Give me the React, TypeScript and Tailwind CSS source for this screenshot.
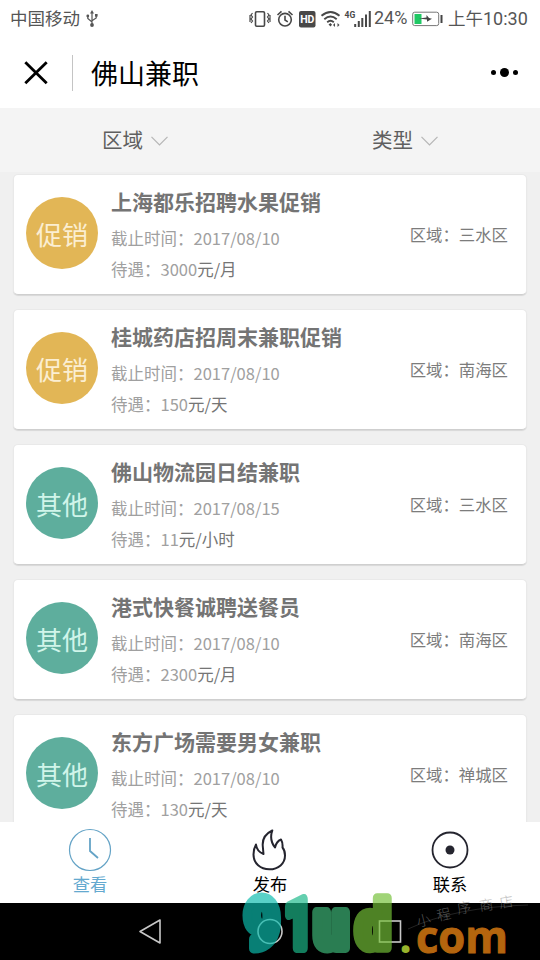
type Job = {
    title: string;
    kind: string;
    deadline: string;
    amount: string;
    unit: string;
    area: string;
};

const jobs: Job[] = [
    { title: '上海都乐招聘水果促销', kind: '促销', deadline: '2017/08/10', amount: '3000', unit: '元/月', area: '三水区' },
    { title: '桂城药店招周末兼职促销', kind: '促销', deadline: '2017/08/10', amount: '150', unit: '元/天', area: '南海区' },
    { title: '佛山物流园日结兼职', kind: '其他', deadline: '2017/08/15', amount: '11', unit: '元/小时', area: '三水区' },
    { title: '港式快餐诚聘送餐员', kind: '其他', deadline: '2017/08/10', amount: '2300', unit: '元/月', area: '南海区' },
    { title: '东方广场需要男女兼职', kind: '其他', deadline: '2017/08/10', amount: '130', unit: '元/天', area: '禅城区' },
];

function StatusBar() {
    return (
        <div className="flex h-[37px] shrink-0 items-center pl-[10px] text-[17.5px] leading-[36px] text-[#555]">
            <span className="-mt-px">中国移动</span>
            <svg className="ml-[6px] h-[17px] w-3 shrink-0" viewBox="0 0 12 17" fill="none" stroke="#555" strokeWidth="1.2">
                <path d="M6 2v13M1.8 6v2.5L6 12M10.2 5.5V8L6 10.8" />
                <path d="M6 0 8 3.5H4Z" fill="#555" stroke="none" />
                <circle cx="1.8" cy="6" r="1.4" fill="#555" stroke="none" />
                <rect x="9" y="4" width="2.6" height="2.6" fill="#555" stroke="none" />
                <circle cx="6" cy="15" r="1.9" fill="#555" stroke="none" />
            </svg>
            <svg className="ml-[151px] h-[22px] w-[124px] shrink-0" viewBox="249 7 124 22" fill="none" stroke="#484848" strokeWidth="1.6">
                {/* vibrate */}
                <rect x="255.5" y="10.8" width="9" height="14.5" rx="1.2" />
                <path d="M252.5 12l-1.5 2 1.5 2-1.5 2 1.5 2-1.5 2M250 14v7M267.5 12l1.5 2-1.5 2 1.5 2-1.5 2 1.5 2M270 14v7" strokeWidth="1.2" />
                {/* alarm */}
                <circle cx="285" cy="18.7" r="6.3" />
                <path d="M285 14.8v4.2l2.8 1.8M277.5 14l4-3.6M292.5 14l-4-3.6" />
                <rect x="299" y="10" width="16.5" height="16.5" rx="2" fill="#484848" stroke="none" />
                <text x="307.3" y="22" textAnchor="middle" fill="#fff" stroke="none" className="font-['Roboto'] text-[10.5px] font-bold">HD</text>
                {/* wifi */}
                <path d="M321.5 14.8q9-7.8 18 0M324.3 18.2q6.2-5.2 12.4 0M327.2 21.2q3.3-2.8 6.6 0" strokeWidth="1.9" />
                <path d="M328.5 23.4 330.5 22 332 23.8 330.5 25.5ZM333 24l2-2v4ZM339.5 24l-2-2v4Z" fill="#484848" stroke="none" />
                <text x="344.5" y="17" fill="#484848" stroke="none" className="font-['Roboto'] text-[8.5px] font-bold">4G</text>
                <path d="M355.2 26v-3M358.8 26v-6M362.3 26v-9M366 26v-12.5M369.8 26v-16" strokeWidth="2" />
            </svg>
            <span className="-mt-[2px] ml-px w-[33px] font-['Roboto'] text-[18px] whitespace-nowrap">24%</span>
            <svg className="ml-[5px] h-[16px] w-[31px] shrink-0" viewBox="0 0 31 16">
                <rect x="0.7" y="1.2" width="26" height="13.4" rx="2" fill="#fff" stroke="#777" />
                <rect x="2.5" y="3" width="7" height="10" fill="#20c864" />
                <path d="M7 7.5l7.5-1V4l2.5 3 3 .8-5 3V8.5Z" fill="#444" />
                <path d="M29.5 4v8" stroke="#444" strokeWidth="2" />
            </svg>
            <span className="-mt-px ml-[5px] whitespace-nowrap">上午<span className="font-['Roboto'] text-[18px]">10:30</span></span>
        </div>
    );
}

function Header() {
    return (
        <div className="flex h-[71px] shrink-0 items-center pr-[22px] pl-[24px]">
            <svg className="size-6" viewBox="0 0 24 24" stroke="#000" strokeWidth="2.8">
                <path d="M1.3 1.3 22.7 22.2M22.7 1.3 1.3 22.2" />
            </svg>
            <div className="ml-6 h-9 w-px bg-[#c4c4c4]"></div>
            <h1 className="ml-[18px] flex-1 text-[27px] leading-[40px] text-black">佛山兼职</h1>
            <div className="flex items-center gap-1">
                <span className="size-[5px] rounded-full bg-black"></span>
                <span className="size-[9px] rounded-full bg-black"></span>
                <span className="size-[5px] rounded-full bg-black"></span>
            </div>
        </div>
    );
}

function Filter({ label }: { label: string }) {
    return (
        <button className="flex flex-1 items-center justify-center gap-2 pb-[3px] text-[20.5px] leading-[30px] text-[#5f5f5f]">
            {label}
            <svg className="mt-[5px] h-[10px] w-[17px]" viewBox="0 0 17 10" fill="none" stroke="#b5b5b5" strokeWidth="1.2">
                <path d="M.5.8l8 8 8-8" />
            </svg>
        </button>
    );
}

function JobCard({ job }: { job: Job }) {
    return (
        <div className="flex h-[121px] shrink-0 rounded-[5px] border border-[#e9e9e9] border-b-[#cfcfcf] bg-white pr-[18px] pl-[12px] shadow-[0_1px_1px_rgba(0,0,0,0.1)]">
            <div className={`mt-[22px] flex size-[72px] shrink-0 items-center justify-center rounded-full text-[26px] leading-[36px] ${job.kind === '促销' ? 'bg-[#e2b656] text-[#fbeed2]' : 'bg-[#5eae9d] text-[#d0f5ea]'}`}>
                <span className="mt-px">{job.kind}</span>
            </div>
            <div className="ml-[13px] flex-1 whitespace-nowrap">
                <h2 className="mt-[10px] text-[21px] leading-[32px] font-bold text-[#747474]">{job.title}</h2>
                <p className="mt-[5px] text-[16.5px] leading-[32px] text-[#a0a0a0]">截止时间：{job.deadline}</p>
                <p className="text-[16.5px] leading-[31px] text-[#a0a0a0]">
                    待遇：{job.amount}<span className="text-[#757575]">{job.unit}</span>
                </p>
            </div>
            <p className="mt-[43px] text-[16.4px] leading-[32px] whitespace-nowrap text-[#7c7c7c]">区域：{job.area}</p>
        </div>
    );
}

function TabBar() {
    return (
        <div className="grid h-[81px] shrink-0 grid-cols-3 bg-white text-[17.3px] leading-[24px] text-black">
            <button className="flex flex-col items-center pt-[6px] text-[#64a9cf]">
                <svg className="size-11" viewBox="0 0 44 44" fill="none" stroke="#64a3c6">
                    <circle cx="22" cy="22" r="20.5" strokeWidth="1.2" />
                    <path d="M22 10v13l8 7" strokeWidth="1.8" />
                </svg>
                <span>查看</span>
            </button>
            <button className="flex flex-col items-center pt-[6px]">
                <svg className="size-11" viewBox="248 828 44 44" fill="none" stroke="#25252f" strokeWidth="2" strokeLinejoin="round">
                    <path d="M272.300 830.500C266 833.500 262 839 262.800 846.500L263.500 854C259.500 852.500 256.500 849 256 844.500C254 848 253.500 851 253.500 854.500C253.500 863.500 260.500 869.300 269.300 869.300C278.500 869.300 285 863.500 285 855.500C285 852.500 284.200 849.500 282.500 847.500C282.800 844.500 282.500 842 281 839.500C278.500 840.500 276 843 275 847.500C271.500 843 270 837 272.300 830.500Z" />
                </svg>
                <span>发布</span>
            </button>
            <button className="flex flex-col items-center pt-[6px]">
                <svg className="size-11" viewBox="0 0 44 44" fill="none" stroke="#25252f" strokeWidth="1.8">
                    <circle cx="22" cy="22" r="17.500" />
                    <circle cx="22" cy="22" r="4.500" fill="#25252f" stroke="none" />
                </svg>
                <span>联系</span>
            </button>
        </div>
    );
}

function SystemNav() {
    return (
        <div className="h-[57px] shrink-0 bg-black">
            <svg className="h-[57px] w-[540px]" viewBox="0 903 540 57" fill="none" stroke="#c8c8c8" strokeWidth="1.6">
                <path d="M160 920v23l-20-11.500Z" strokeLinejoin="round" />
                <circle cx="270" cy="931.500" r="12" />
                <rect x="379.500" y="921" width="21" height="21" />
            </svg>
        </div>
    );
}

function Watermark() {
    return (
        <svg className="pointer-events-none absolute bottom-0 left-0 h-[80px] w-[540px]" viewBox="0 880 540 80">
            <g opacity="0.68" strokeLinejoin="round" strokeWidth="9" className="font-['Roboto'] text-[62px] font-black">
                <text transform="translate(244.500 948) scale(.97 1.12)" fill="#0cbcad" stroke="#0cbcad">9</text>
                <text transform="translate(284.500 948) scale(.78 1.12)" fill="#1cb98a" stroke="#1cb98a">1</text>
                <text transform="translate(314 948) scale(.98 1.12)" fill="#3fb979" stroke="#3fb979">u</text>
                <text transform="translate(356 948) scale(.98 1.08)" fill="#74c037" stroke="#74c037">d</text>
            </g>
            <text x="399" y="953" fill="#98b42c" className="font-['Open_Sans'] text-[46px] font-bold">.</text>
            <text x="416" y="953" textLength="92" lengthAdjust="spacingAndGlyphs" fill="#b4650e" stroke="#b4650e" className="font-['Open_Sans'] text-[45px] font-bold">com</text>
            <g fill="#8b8b8b" opacity="0.6" className="text-[14px] font-light">
                <text transform="translate(418 927) rotate(-14)">小</text>
                <text transform="translate(438 921) rotate(-12)">程</text>
                <text transform="translate(458 914) rotate(-10)">序</text>
                <text transform="translate(480 911) rotate(-8)">商</text>
                <text transform="translate(500 908) rotate(-8)">店</text>
            </g>
            <path d="M408 929Q455 907 528 905" fill="none" stroke="#777" strokeWidth="0.600" opacity="0.500" />
        </svg>
    );
}

function App() {
    return (
        <div className="relative flex h-[960px] w-[540px] flex-col overflow-hidden bg-white font-['Noto_Sans_CJK_SC',sans-serif]">
            <StatusBar />
            <Header />
            <div className="flex h-[64px] shrink-0 bg-[#f4f4f4]">
                <Filter label="区域" />
                <Filter label="类型" />
            </div>
            <main className="flex min-h-0 flex-1 flex-col gap-[14px] overflow-hidden bg-[#f0f0f0] px-[13px] pt-[2px]">
                {jobs.map((job, index) => (
                    <JobCard key={index} job={job} />
                ))}
            </main>
            <TabBar />
            <SystemNav />
            <Watermark />
        </div>
    );
}

export default App;
